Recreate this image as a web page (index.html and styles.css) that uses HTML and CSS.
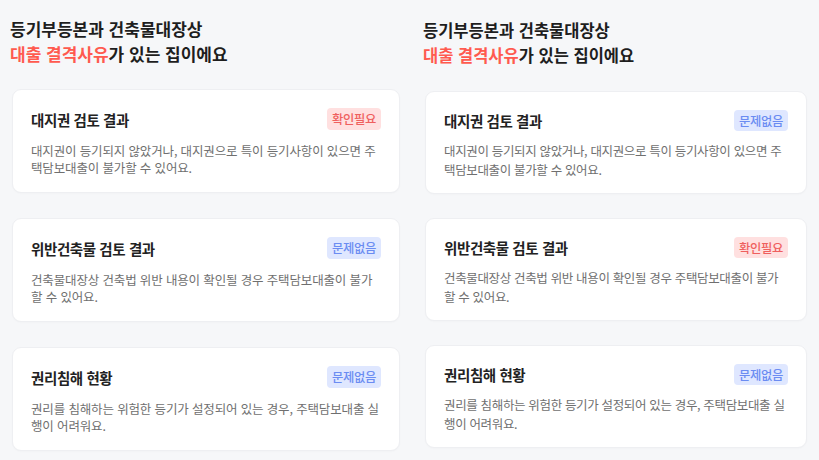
FILE: index.html
```html
<!DOCTYPE html>
<html lang="ko">
<head>
<meta charset="utf-8">
<link rel="stylesheet" href="styles.css">
</head>
<body>
<div class="page">
  <section class="panel panel-left">
    <h1 class="heading">등기부등본과 건축물대장상<br><span class="hl">대출 결격사유</span>가 있는 집이에요</h1>
    <div class="cards">
      <div class="card">
        <div class="card-head"><span class="title">대지권 검토 결과</span><span class="badge badge-red">확인필요</span></div>
        <p class="desc">대지권이 등기되지 않았거나, 대지권으로 특이 등기사항이 있으면 주택담보대출이 불가할 수 있어요.</p>
      </div>
      <div class="card">
        <div class="card-head"><span class="title">위반건축물 검토 결과</span><span class="badge badge-blue">문제없음</span></div>
        <p class="desc">건축물대장상 건축법 위반 내용이 확인될 경우 주택담보대출이 불가할 수 있어요.</p>
      </div>
      <div class="card">
        <div class="card-head"><span class="title">권리침해 현황</span><span class="badge badge-blue">문제없음</span></div>
        <p class="desc">권리를 침해하는 위험한 등기가 설정되어 있는 경우, 주택담보대출 실행이 어려워요.</p>
      </div>
    </div>
  </section>
  <section class="panel panel-right">
    <h1 class="heading">등기부등본과 건축물대장상<br><span class="hl">대출 결격사유</span>가 있는 집이에요</h1>
    <div class="cards">
      <div class="card">
        <div class="card-head"><span class="title">대지권 검토 결과</span><span class="badge badge-blue">문제없음</span></div>
        <p class="desc">대지권이 등기되지 않았거나, 대지권으로 특이 등기사항이 있으면 주택담보대출이 불가할 수 있어요.</p>
      </div>
      <div class="card">
        <div class="card-head"><span class="title">위반건축물 검토 결과</span><span class="badge badge-red">확인필요</span></div>
        <p class="desc">건축물대장상 건축법 위반 내용이 확인될 경우 주택담보대출이 불가할 수 있어요.</p>
      </div>
      <div class="card">
        <div class="card-head"><span class="title">권리침해 현황</span><span class="badge badge-blue">문제없음</span></div>
        <p class="desc">권리를 침해하는 위험한 등기가 설정되어 있는 경우, 주택담보대출 실행이 어려워요.</p>
      </div>
    </div>
  </section>
</div>
</body>
</html>
```
FILE: styles.css
```css
* { box-sizing: border-box; }
html, body {
  margin: 0;
  padding: 0;
  background: #f6f7f9;
}
body {
  font-family: "Noto Sans CJK KR", "Noto Sans", sans-serif;
  color: #222;
  width: 819px;
  height: 460px;
  overflow: hidden;
}
.page {
  display: grid;
  grid-template-columns: 410px 409px;
}
.panel-left {
  padding: 16px 10px 0 12px;
}
.panel-right {
  padding: 18px 12px 0 15px;
}
.heading {
  margin: 0 0 23px -2px;
  font-size: 17px;
  line-height: 25px;
  font-weight: 600;
  color: #1e1e1e;
  letter-spacing: 0;
}
.hl { color: #ff5a4f; }
.cards {
  display: flex;
  flex-direction: column;
  gap: 25px;
}
.card {
  background: #fff;
  border: 1px solid #eeeff2;
  border-radius: 9px;
  padding: 18px 18px 16px;
  box-shadow: 0 1px 2px rgba(0,0,0,0.02);
}
.card-head {
  display: flex;
  justify-content: space-between;
  align-items: center;
  height: 22px;
}
.title {
  font-size: 14.5px;
  font-weight: 700;
  letter-spacing: -0.4px;
  color: #222;
}
.badge {
  display: inline-flex;
  align-items: center;
  justify-content: center;
  height: 22px;
  padding: 0 5px;
  border-radius: 4px;
  font-size: 12.3px;
  font-weight: 500;
  letter-spacing: -0.3px;
}
.badge-red { background: #ffe0e0; color: #ef5f5e; }
.badge-blue { background: #dfe7ff; color: #6b8cf2; }
.desc {
  margin: 12px 0 0;
  font-size: 12.5px;
  line-height: 17px;
  letter-spacing: -0.15px;
  color: #6f6f6f;
}
.panel-right .heading {
  margin-bottom: 23px;
  font-size: 16.5px;
}
.panel-right .cards { gap: 24px; }
.panel-right .card { padding: 18px 18px 14px; }
.panel-right .card-head { height: 21px; }
.panel-right .badge { height: 21px; }
.panel-right .desc {
  margin-top: 10px;
  margin-right: 3px;
  line-height: 19px;
  letter-spacing: -0.35px;
}
```
